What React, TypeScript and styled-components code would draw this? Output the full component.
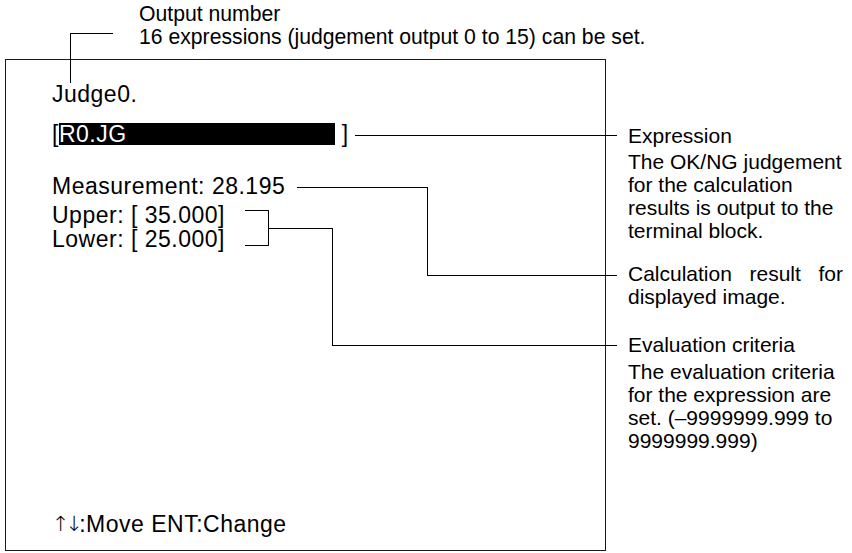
import React from "react";
import styled, { createGlobalStyle } from "styled-components";

const Global = createGlobalStyle`
  html, body { margin: 0; padding: 0; background: #fff; }
  body { font-family: "Liberation Sans", Arial, sans-serif; color: #000; }
`;

const Page = styled.div`
  position: relative;
  width: 852px;
  height: 553px;
  overflow: hidden;
  padding-left: 5px;
  box-sizing: border-box;
`;

const Header = styled.div`
  padding: 2px 0 0 134px;
  font-size: 21.2px;
  line-height: 23px;
  height: 59px;
  box-sizing: border-box;
`;

const Main = styled.div`
  display: flex;
  align-items: flex-start;
`;

const Screen = styled.div`
  width: 601px;
  height: 492px;
  box-sizing: border-box;
  border: 1px solid #1a1a1a;
  padding: 22px 0 14px 46px;
  display: flex;
  flex-direction: column;
  font-size: 23px;
  letter-spacing: 0.5px;
  line-height: 24px;
`;

const ScreenLine = styled.div<{ $gap?: number }>`
  margin-top: ${(p) => p.$gap ?? 0}px;
  white-space: pre;
`;

const ExprRow = styled.div`
  margin-top: 16px;
  display: flex;
  align-items: center;
  height: 24px;
`;

const Highlight = styled.span`
  display: inline-block;
  width: 276px;
  height: 22px;
  line-height: 22px;
  background: #000;
  color: #fff;
`;

const Footer = styled.div`
  margin-top: auto;
  display: flex;
  align-items: center;
  height: 24px;
`;

const Arrows = styled.span`
  font-family: "DejaVu Sans", sans-serif;
  font-weight: 200;
  font-size: 21px;
  line-height: 24px;
  letter-spacing: -4px;
  color: #000;
`;

const Notes = styled.div`
  margin-left: 22px;
  width: 215px;
  padding-top: 65px;
  font-size: 21px;
  line-height: 23px;
`;

const NoteTitle = styled.div<{ $gap?: number }>`
  margin-top: ${(p) => p.$gap ?? 0}px;
`;

const NoteText = styled.p<{ $gap?: number; $justify?: boolean }>`
  margin: ${(p) => p.$gap ?? 0}px 0 0;
  text-align: ${(p) => (p.$justify ? "justify" : "left")};
`;

const Leaders = styled.svg`
  position: absolute;
  left: 0;
  top: 0;
  pointer-events: none;
`;

export default function App() {
  return (
    <>
      <Global />
      <Page>
        <Header>
          <div>Output number</div>
          <div>16 expressions (judgement output 0 to 15) can be set.</div>
        </Header>
        <Main>
          <Screen>
            <ScreenLine>Judge0.</ScreenLine>
            <ExprRow>
              <span>[</span>
              <Highlight>R0.JG</Highlight>
              <span>&nbsp;]</span>
            </ExprRow>
            <ScreenLine $gap={28}>Measurement: 28.195</ScreenLine>
            <ScreenLine $gap={5}>Upper: [ 35.000]</ScreenLine>
            <ScreenLine>Lower: [ 25.000]</ScreenLine>
            <Footer>
              <Arrows>↑↓</Arrows>
              <span>:Move ENT:Change</span>
            </Footer>
          </Screen>
          <Notes>
            <NoteTitle>Expression</NoteTitle>
            <NoteText $gap={3}>
              The OK/NG judgement for the calculation results is output to the terminal block.
            </NoteText>
            <NoteText $gap={20} $justify>
              Calculation result for displayed image.
            </NoteText>
            <NoteTitle $gap={25}>Evaluation criteria</NoteTitle>
            <NoteText $gap={4}>
              The evaluation criteria for the expression are set. (–9999999.999 to 9999999.999)
            </NoteText>
          </Notes>
        </Main>
        <Leaders width="852" height="553" viewBox="0 0 852 553">
          <g fill="none" stroke="#000" strokeWidth="1" shapeRendering="crispEdges">
            <path d="M113 33.5H70.5V83" />
            <path d="M355 135.5H617" />
            <path d="M297 187.5H427.5V275.5H617" />
            <path d="M245 210.5H268.5V245.5H245" />
            <path d="M268.5 228.5H332.5V345.5H617" />
          </g>
        </Leaders>
      </Page>
    </>
  );
}
